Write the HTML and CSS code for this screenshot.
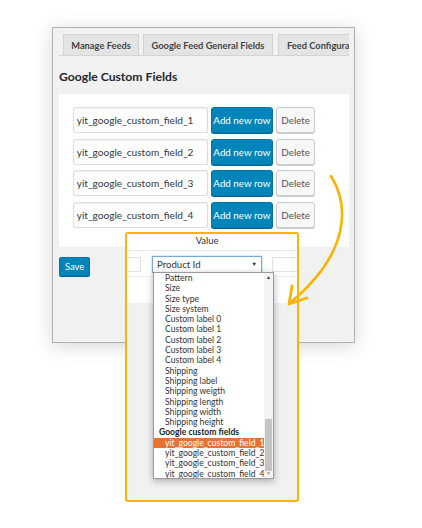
FILE: index.html
```html
<!DOCTYPE html>
<html>
<head>
<meta charset="utf-8">
<link rel="stylesheet" href="styles.css">
</head>
<body>
<div class="stage">
  <div class="panel">
    <div class="wrap">
      <div class="tabs">
        <div class="tab tab1">Manage Feeds</div>
        <div class="tab tab2">Google Feed General Fields</div>
        <div class="tab tab3">Feed Configura</div>
      </div>
      <h2 class="title">Google Custom Fields</h2>
      <div class="box">
        <div class="row"><div class="input">yit_google_custom_field_1</div><div class="btn primary add">Add new row</div><div class="btn del">Delete</div></div>
        <div class="row"><div class="input">yit_google_custom_field_2</div><div class="btn primary add">Add new row</div><div class="btn del">Delete</div></div>
        <div class="row"><div class="input">yit_google_custom_field_3</div><div class="btn primary add">Add new row</div><div class="btn del">Delete</div></div>
        <div class="row"><div class="input">yit_google_custom_field_4</div><div class="btn primary add">Add new row</div><div class="btn del">Delete</div></div>
      </div>
      <div class="btn primary save">Save</div>
    </div>
  </div>

  <div class="zoom">
    <div class="ztable">
      <div class="zhead"><span></span><span class="zval">Value</span><span></span></div>
      <div class="zrow">
        <div class="zin"></div>
        <div class="zsel"><span>Product Id</span><span class="caret">&#9660;</span></div>
        <div class="zin"></div>
      </div>
    </div>
    <div class="dropdown">
      <ul class="list">
        <li>Pattern</li>
        <li>Size</li>
        <li>Size type</li>
        <li>Size system</li>
        <li>Custom label 0</li>
        <li>Custom label 1</li>
        <li>Custom label 2</li>
        <li>Custom label 3</li>
        <li>Custom label 4</li>
        <li>Shipping</li>
        <li>Shipping label</li>
        <li>Shipping weigth</li>
        <li>Shipping length</li>
        <li>Shipping width</li>
        <li>Shipping height</li>
        <li class="group">Google custom fields</li>
        <li class="sel">yit_google_custom_field_1</li>
        <li>yit_google_custom_field_2</li>
        <li>yit_google_custom_field_3</li>
        <li>yit_google_custom_field_4</li>
      </ul>
      <div class="sbar">
        <span class="sup">&#9650;</span>
        <span class="thumb"></span>
        <span class="sdown">&#9660;</span>
      </div>
    </div>
  </div>

  <svg class="arrow" width="422" height="528" viewBox="0 0 422 528">
    <path d="M331,176 C349,205 351,252 290,303" fill="none" stroke="#fbb300" stroke-width="2.6" stroke-linecap="round"/>
    <path d="M292,286 L289,304 L307,298" fill="none" stroke="#fbb300" stroke-width="2.8" stroke-linecap="round" stroke-linejoin="round"/>
  </svg>
</div>
</body>
</html>
```

FILE: styles.css
```css
* { box-sizing: border-box; }
html, body { margin: 0; padding: 0; background: #fff; }
body { width: 422px; height: 528px; overflow: hidden; font-family: Lato, "Open Sans", sans-serif; color: #32373c; }
.stage { position: relative; width: 422px; height: 528px; padding-top: 27px; }

.panel {
  margin-left: 52px;
  width: 303px;
  height: 316px;
  background: #f1f1f1;
  border: 1px solid #b0b0b0;
  box-shadow: 0 3px 18px rgba(0,0,0,0.16);
}
.wrap { padding: 6px 5px 0 6px; overflow: hidden; height: 100%; }

.tabs {
  display: flex;
  gap: 4px;
  padding-left: 4px;
  height: 22px;
  white-space: nowrap;
  overflow: hidden;
  border-bottom: 1px solid #d4d4d4;
}
.tab {
  flex-shrink: 0;
  height: 22px;
  background: #e4e4e4;
  border: 1px solid #d2d2d2;
  border-bottom: none;
  font-size: 9.3px;
  font-weight: 700;
  color: #444;
  display: flex;
  align-items: center;
  justify-content: center;
}
.tab1 { width: 76px; }
.tab2 { width: 130px; }
.tab3 { width: 80px; margin-left: 1px; padding-left: 8px; justify-content: flex-start; }

.title {
  margin: 13px 0 9px 0;
  font-size: 12.2px;
  line-height: 16px;
  font-weight: 700;
  color: #23282d;
}

.box {
  background: #fff;
  height: 153px;
  padding: 13px 0 0 13.7px;
  display: flex;
  flex-direction: column;
  gap: 5.7px;
}
.row { display: flex; gap: 3px; height: 26px; }
.input {
  width: 135px;
  height: 26px;
  border: 1px solid #ddd;
  border-radius: 2px;
  box-shadow: inset 0 1px 2px rgba(0,0,0,0.07);
  font-size: 10.1px;
  padding-left: 3px;
  display: flex;
  align-items: center;
  color: #32373c;
}
.btn {
  height: 26px;
  border-radius: 3px;
  font-size: 9.8px;
  display: flex;
  align-items: center;
  justify-content: center;
}
.primary {
  background: #0085ba;
  border: 1px solid #0073aa;
  box-shadow: 0 1px 0 #006799;
  color: #fff;
}
.add { width: 62.5px; }
.del {
  width: 39px;
  background: #f7f7f7;
  border: 1px solid #ccc;
  box-shadow: 0 1px 0 #ccc;
  color: #555;
}
.save { width: 31px; height: 19px; margin-top: 10px; font-size: 9.4px; border-radius: 2px; }

.zoom {
  position: absolute;
  left: 125px;
  top: 232px;
  width: 174px;
  height: 270px;
  border: 2px solid #fbb400;
  border-radius: 3px;
  background: #f1f1f1;
  overflow: hidden;
}
.ztable { background: #fff; height: 69px; }
.zhead, .zrow {
  display: grid;
  grid-template-columns: 15px 110px 26px;
  column-gap: 11px;
  margin-left: -1px;
}
.zhead { height: 17px; border-bottom: 1px solid #e6e6e6; align-items: start; padding-top: 1px; }
.zval { text-align: center; font-size: 9.4px; line-height: 11px; color: #333; }
.zrow { height: 26px; border-bottom: 1px solid #eee; align-items: center; padding-top: 1px; }
.zrow .zin:last-child { margin-left: -1px; }
.zin { height: 15px; border: 1px solid #e2e2e2; background: #fff; }
.zsel {
  height: 17px;
  border: 1px solid #7aa9d6;
  box-shadow: 0 0 2px rgba(30,140,190,0.5);
  font-size: 9.6px;
  color: #333;
  display: flex;
  align-items: center;
  justify-content: space-between;
  padding: 0 4px 0 4px;
}
.caret { font-size: 5.5px; color: #222; }

.dropdown {
  position: absolute;
  left: 26px;
  top: 38px;
  width: 121px;
  height: 207px;
  background: #fff;
  border: 1px solid #9a9a9a;
  box-shadow: 0 2px 7px rgba(0,0,0,0.3);
  overflow: hidden;
}
.list {
  list-style: none;
  margin: 0;
  padding: 0;
  padding-right: 9px;
  font-size: 8.6px;
  color: #333;
}
.list li { height: 10.3px; line-height: 10.3px; padding-left: 11px; white-space: nowrap; overflow: hidden; }
.list li.group { font-weight: 700; padding-left: 5px; color: #222; }
.list li.sel { background: #e8722f; color: #fff; }
.sbar {
  position: absolute;
  right: 0;
  top: 0;
  bottom: 0;
  width: 9px;
  background: #f3f3f3;
  display: flex;
  flex-direction: column;
  align-items: center;
}
.sup, .sdown { font-size: 5px; height: 9px; line-height: 9px; color: #333; }
.sdown { color: #999; margin-top: auto; }
.thumb { position: absolute; left: 1px; right: 1px; top: 146px; height: 52px; background: #c4c4c4; }

.arrow { position: absolute; left: 0; top: 0; pointer-events: none; }
```
